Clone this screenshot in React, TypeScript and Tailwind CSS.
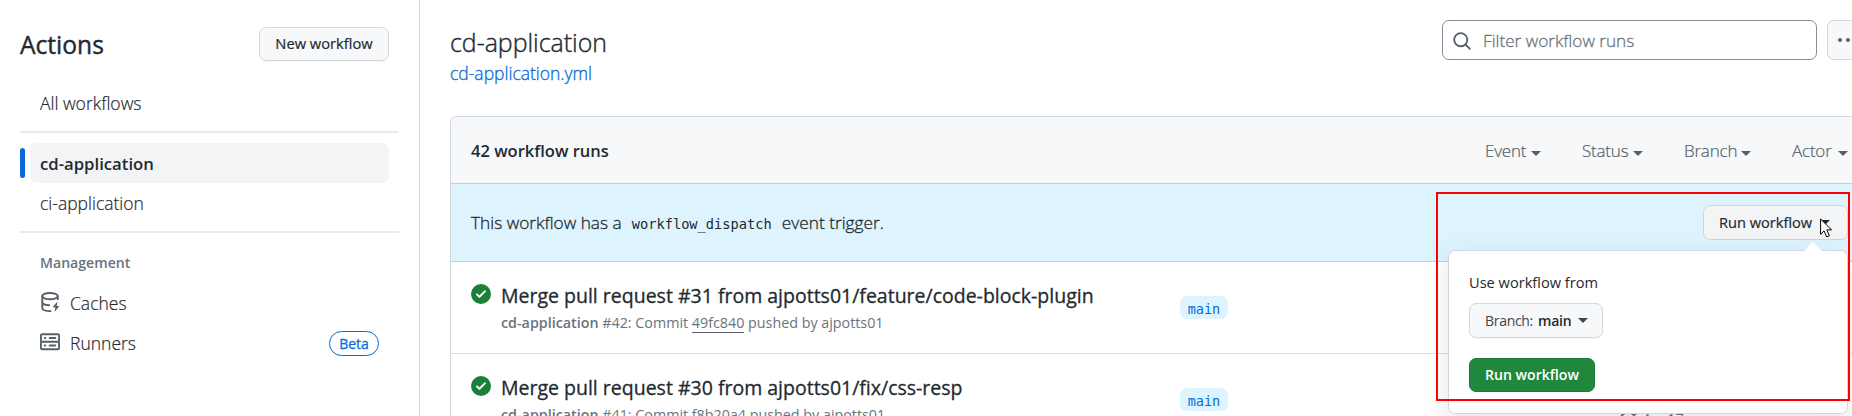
import type { ReactNode } from "react";

type IconProps = { className?: string };

function Octicon({ d, className = "" }: IconProps & { d: string }) {
  return (
    <svg viewBox="0 0 16 16" className={`size-5 shrink-0 fill-current ${className}`} aria-hidden="true">
      <path fillRule="evenodd" d={d} />
    </svg>
  );
}

const CHECK =
  "M8 16A8 8 0 1 1 8 0a8 8 0 0 1 0 16Zm3.78-9.72a.751.751 0 0 0-.018-1.042.751.751 0 0 0-1.042-.018L6.75 9.19 5.28 7.72a.751.751 0 0 0-1.042.018.751.751 0 0 0-.018 1.042l2 2a.75.75 0 0 0 1.06 0Z";
const SEARCH =
  "M10.68 11.74a6 6 0 0 1-7.922-8.982 6 6 0 0 1 8.982 7.922l3.04 3.04a.749.749 0 0 1-.326 1.275.749.749 0 0 1-.734-.215ZM11.5 7a4.499 4.499 0 1 0-8.997 0A4.499 4.499 0 0 0 11.5 7Z";
const SERVER =
  "M1.75 1h12.5c.966 0 1.75.784 1.75 1.75v4c0 .372-.116.717-.314 1 .198.283.314.628.314 1v4a1.75 1.75 0 0 1-1.75 1.75H1.75A1.75 1.75 0 0 1 0 12.75v-4c0-.358.109-.707.314-1a1.739 1.739 0 0 1-.314-1v-4C0 1.784.784 1 1.75 1ZM1.5 2.75v4c0 .138.112.25.25.25h12.5a.25.25 0 0 0 .25-.25v-4a.25.25 0 0 0-.25-.25H1.75a.25.25 0 0 0-.25.25Zm.25 5.75a.25.25 0 0 0-.25.25v4c0 .138.112.25.25.25h12.5a.25.25 0 0 0 .25-.25v-4a.25.25 0 0 0-.25-.25ZM7 4.75A.75.75 0 0 1 7.75 4h4.5a.75.75 0 0 1 0 1.5h-4.5A.75.75 0 0 1 7 4.75ZM7.75 10h4.5a.75.75 0 0 1 0 1.5h-4.5a.75.75 0 0 1 0-1.5ZM3 4.75A.75.75 0 0 1 3.75 4h.5a.75.75 0 0 1 0 1.5h-.5A.75.75 0 0 1 3 4.75ZM3.75 10h.5a.75.75 0 0 1 0 1.5h-.5a.75.75 0 0 1 0-1.5Z";

function CacheIcon() {
  return (
    <svg viewBox="0 0 16 16" className="size-5 shrink-0 -translate-y-px" fill="none" stroke="currentColor" strokeWidth="1.5" strokeLinecap="round" aria-hidden="true">
      <ellipse cx="8" cy="3.25" rx="6.2" ry="2.5" />
      <path d="M1.8 3.4v9.1c0 1.4 2.3 2.5 5.2 2.75h1.5M1.8 8c0 1.3 2.3 2.4 5.2 2.6h.4M14.2 3.4v2.4" />
      <path d="M13.9 7.6 10 12.2h2.2l-.5 3.6 3.9-4.7h-2.2z" fill="currentColor" stroke="none" />
    </svg>
  );
}

function StopwatchIcon() {
  return (
    <svg viewBox="0 0 16 16" className="size-5 shrink-0" fill="none" stroke="currentColor" strokeWidth="1.5" strokeLinecap="round" aria-hidden="true">
      <circle cx="8" cy="9" r="6.2" />
      <path d="M6 .8h4M8 1v1.8M8 6v3.2M13.2 3.2l.9.9" />
    </svg>
  );
}

function Caret({ className = "" }: IconProps) {
  return (
    <svg viewBox="0 0 10 5" className={`h-[5px] w-2.5 shrink-0 fill-current ${className}`} aria-hidden="true">
      <path d="M0 0h10L5 5z" />
    </svg>
  );
}

function NavItem({ label, icon, badge, selected }: { label: string; icon?: ReactNode; badge?: string; selected?: boolean }) {
  return (
    <li className="flex h-10 items-center">
      <span className={`mr-[5px] h-[30px] w-[5px] shrink-0 rounded-full ${selected ? "bg-[#0969da]" : ""}`} />
      <a
        className={`flex h-10 flex-1 items-center gap-2.5 rounded-[7px] px-2.5 text-[#24292f] ${
          selected
            ? "bg-[#f3f4f6] pt-px text-[16.7px] font-semibold"
            : "text-[17.5px] font-light [-webkit-text-stroke:0.2px]"
        }`}
      >
        {icon && <span className="text-[#57606a]">{icon}</span>}
        <span className="flex-1">{label}</span>
        {badge && (
          <span className="flex h-[25px] w-[50px] items-center justify-center rounded-full border border-[#0969da] text-[14px] font-normal text-[#0969da] [-webkit-text-stroke:0.3px]">
            {badge}
          </span>
        )}
      </a>
    </li>
  );
}

function Filter({ label, width }: { label: string; width: string }) {
  return (
    <button className={`flex shrink-0 items-center justify-between ${width}`}>
      <span className="text-[17px] font-light tracking-[-0.2px] [-webkit-text-stroke:0.2px]">{label}</span>
      <Caret className="mt-1" />
    </button>
  );
}

function RunRow({ title, run, sha, children }: { title: string; run: string; sha: string; children?: ReactNode }) {
  return (
    <li className="flex h-[92px] shrink-0 border-b border-[#d8dee4] pl-5">
      <Octicon d={CHECK} className="mt-[22px] text-[#1a7f37]" />
      <div className="ml-2.5 flex w-[679px] shrink-0 flex-col whitespace-nowrap pt-[21px]">
        <a className="text-[19.5px] leading-[26px] text-[#24292f] [-webkit-text-stroke:0.3px]">{title}</a>
        <p className="mt-[3px] text-[14.3px] leading-[22px] text-[#6a737d]">
          <b className="font-semibold">cd-application</b> {run}: Commit{" "}
          <span className="border-b border-[#57606a]">{sha}</span> pushed by ajpotts01
        </p>
      </div>
      <span className="mt-[34px] flex h-[23px] w-12 shrink-0 items-center justify-center rounded-[7px] bg-[#ddf4ff] pt-[3px] font-['DejaVu_Sans_Mono',monospace] text-[13.5px] leading-5 text-[#0969da]">
        main
      </span>
      {children}
    </li>
  );
}

function RunWorkflowMenu() {
  return (
    <div className="absolute top-[45px] right-0 h-[164px] w-[400px] rounded-[7px] border border-[#d0d7de] bg-white px-5 shadow-[0_8px_24px_rgba(140,149,159,0.25)]">
      <svg viewBox="0 0 18 9" className="absolute -top-[9px] right-[25px] h-[9px] w-[18px] fill-white" aria-hidden="true">
        <path d="M0 9 9 0l9 9z" />
      </svg>
      <p className="pt-[19px] text-[14.6px] leading-6 text-[#24292f]">Use workflow from</p>
      <button className="mt-[9px] flex h-[35px] w-[134px] items-center rounded-[7px] border border-[#d5d8da] bg-[#f6f8fa] pl-[15px] text-[14px] text-[#24292f] shadow-[0_1px_0_rgba(27,31,36,0.04)]">
        <span className="tracking-[-0.3px] text-[#40464d]">Branch:</span>
        <b className="ml-[5px] font-semibold tracking-[-0.2px]">main</b>
        <Caret className="ml-[6px] text-[#40464d]" />
      </button>
      <button className="mt-5 flex h-[34px] w-[126px] items-center justify-center rounded-[7px] border border-[#1c7a37] bg-[#1f883d] text-[14.1px] font-semibold text-white">
        Run workflow
      </button>
    </div>
  );
}

function Pointer() {
  return (
    <svg viewBox="0 0 12 20" className="absolute top-[13px] right-[16px] h-5 w-3" aria-hidden="true">
      <path d="M.6.9v15.4l3.5-3.4 2.6 6 2.7-1.2-2.6-5.8h4.7z" fill="#fff" stroke="#000" strokeWidth="1" />
    </svg>
  );
}

export default function App() {
  return (
    <div className="relative flex h-[416px] w-[1852px] overflow-hidden bg-white font-['Open_Sans',sans-serif] text-[#24292f]">
      <aside className="w-[420px] shrink-0 border-r border-[#d0d7de] pl-5">
        <header className="flex h-[61px] items-end justify-between pr-[30px]">
          <h1 className="text-[24.6px] leading-[32px] [-webkit-text-stroke:0.4px]">Actions</h1>
          <button className="flex h-[34px] w-[130px] items-center justify-center rounded-[7px] border border-[#d5d8da] bg-[#f6f8fa] pb-px text-[14.7px] shadow-[0_1px_0_rgba(27,31,36,0.04)] [-webkit-text-stroke:0.2px]">
            New workflow
          </button>
        </header>
        <ul className="mt-[22px] pr-[30px]">
          <NavItem label="All workflows" />
        </ul>
        <hr className="mt-2 mr-5 h-0.5 border-0 bg-[#e7ebef]" />
        <ul className="mt-[10px] pr-[30px]">
          <NavItem label="cd-application" selected />
          <NavItem label="ci-application" />
        </ul>
        <hr className="mt-2 mr-5 h-0.5 border-0 bg-[#e7ebef]" />
        <h2 className="mt-[18px] pl-5 text-[14.1px] leading-6 font-semibold text-[#6a737d]">Management</h2>
        <ul className="mt-2 pr-[30px]">
          <NavItem label="Caches" icon={<CacheIcon />} />
          <NavItem label="Runners" icon={<Octicon d={SERVER} className="-translate-y-px" />} badge="Beta" />
        </ul>
      </aside>

      <main className="flex min-w-0 flex-1 flex-col pl-[30px]">
        <header className="flex h-[116px] shrink-0 justify-between">
          <div className="pt-[27px]">
            <h2 className="text-[24.9px] leading-[30px] font-light [-webkit-text-stroke:0.4px]">cd-application</h2>
            <a className="mt-[3px] block text-[17.5px] leading-[26px] font-light text-[#0969da] [-webkit-text-stroke:0.3px]">
              cd-application.yml
            </a>
          </div>
          <div className="flex gap-2.5 pt-5">
            <label className="flex h-10 w-[375px] items-center rounded-[7px] border border-[#848d97] pl-[9px] text-[#6a737d]">
              <Octicon d={SEARCH} className="mt-0.5 text-[#57606a]" />
              <span className="ml-[11px] pt-px text-[17.2px] font-light [-webkit-text-stroke:0.3px]">Filter workflow runs</span>
            </label>
            <button className="flex h-10 w-[25px] items-center gap-1 rounded-l-[7px] border border-r-0 border-[#d5d8da] bg-[#f6f8fa] pl-[10px]">
              <i className="size-1 shrink-0 rounded-full bg-[#57606a]" />
              <i className="size-1 shrink-0 rounded-full bg-[#57606a]" />
            </button>
          </div>
        </header>

        <section className="flex flex-col rounded-tl-[7px] border-t border-l border-[#d0d7de]">
          <div className="flex h-[66px] shrink-0 items-center justify-between rounded-tl-[7px] bg-[#f6f8fa] pt-0.5 pr-[4px] pl-5">
            <h3 className="text-[16.5px] font-semibold">42 workflow runs</h3>
            <div className="flex gap-[41px] text-[#57606a]">
              <Filter label="Event" width="w-[56px]" />
              <Filter label="Status" width="w-[61px]" />
              <Filter label="Branch" width="w-[67px]" />
              <Filter label="Actor" width="w-[56px]" />
            </div>
          </div>

          <div className="flex h-[79px] shrink-0 items-center justify-between border-y border-[#a5d6f8] bg-[#ddf4ff] pr-1 pl-5">
            <p className="pt-px text-[17.3px] font-light [-webkit-text-stroke:0.3px]">
              This workflow has a
              <code className="mx-[10px] font-['DejaVu_Sans_Mono',monospace] text-[13.7px] font-normal [-webkit-text-stroke:0px]">
                workflow_dispatch
              </code>
              event trigger.
            </p>
            <div className="relative z-10">
              <button className="flex h-[35px] w-[145px] items-center rounded-[7px] border border-[#d0d4d9] bg-[#f3f4f6] pl-[15px]">
                <span className="text-[14.6px] [-webkit-text-stroke:0.2px]">Run workflow</span>
                <Caret className="ml-[8px]" />
              </button>
              <RunWorkflowMenu />
              <Pointer />
            </div>
          </div>

          <ul className="flex flex-col">
            <RunRow title="Merge pull request #31 from ajpotts01/feature/code-block-plugin" run="#42" sha="49fc840" />
            <RunRow title="Merge pull request #30 from ajpotts01/fix/css-resp" run="#41" sha="f8b20a4">
              <span className="mt-[53px] ml-[390px] flex h-6 items-center gap-1 text-[14.4px] text-[#57606a]">
                <StopwatchIcon />
                4m 17s
              </span>
            </RunRow>
          </ul>
        </section>
      </main>

      <div className="pointer-events-none absolute top-[192px] left-[1436px] z-20 h-[209px] w-[414px] border-2 border-[#ff0000]" />
    </div>
  );
}
